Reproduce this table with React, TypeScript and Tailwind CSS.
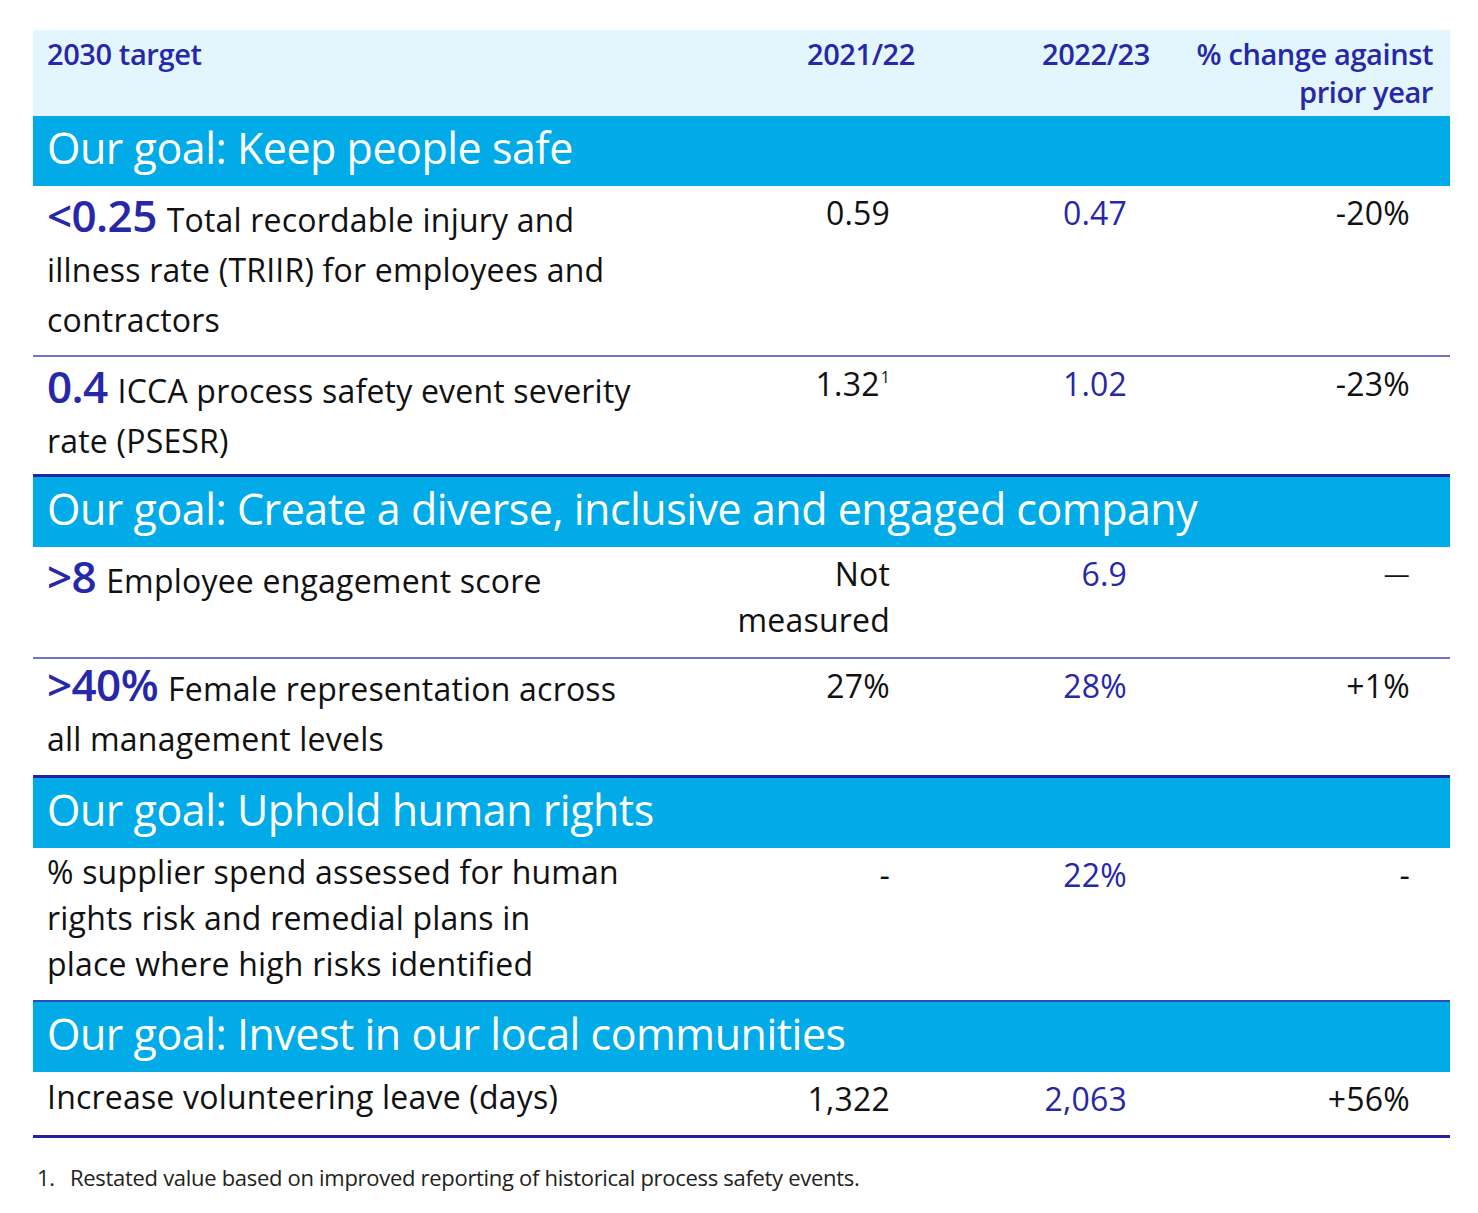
import React from 'react';

type Row = {
  target?: string;
  lines: string[];
  prev: React.ReactNode;
  curr: string;
  change: React.ReactNode;
  h: string;
  lead: string;
  border: 'thin' | 'thick' | 'mid';
};

type Group = { goal: string; rows: Row[] };

const groups: Group[] = [
  {
    goal: 'Our goal: Keep people safe',
    rows: [
      {
        target: '<0.25',
        lines: ['Total recordable injury and', 'illness rate (TRIIR) for employees and', 'contractors'],
        prev: '0.59',
        curr: '0.47',
        change: '-20%',
        h: 'h-[169px]',
        lead: 'leading-[50px] pt-1',
        border: 'thin',
      },
      {
        target: '0.4',
        lines: ['ICCA process safety event severity', 'rate (PSESR)'],
        prev: (
          <>
            1.32<sup className="text-[16px] -top-[13px] ml-[1px]">1</sup>
          </>
        ),
        curr: '1.02',
        change: '-23%',
        h: 'h-[117px]',
        lead: 'leading-[50px] pt-1',
        border: 'thick',
      },
    ],
  },
  {
    goal: 'Our goal: Create a diverse, inclusive and engaged company',
    rows: [
      {
        target: '>8',
        lines: ['Employee engagement score'],
        prev: (
          <>
            Not
            <br />
            measured
          </>
        ),
        curr: '6.9',
        change: <span className="text-[26px] relative -top-[3px]">—</span>,
        h: 'h-[110px]',
        lead: 'leading-[50px] pt-1',
        border: 'thin',
      },
      {
        target: '>40%',
        lines: ['Female representation across', 'all management levels'],
        prev: '27%',
        curr: '28%',
        change: '+1%',
        h: 'h-[116px]',
        lead: 'leading-[50px]',
        border: 'thick',
      },
    ],
  },
  {
    goal: 'Our goal: Uphold human rights',
    rows: [
      {
        lines: ['% supplier spend assessed for human', 'rights risk and remedial plans in', 'place where high risks identified'],
        prev: '-',
        curr: '22%',
        change: '-',
        h: 'h-[152px]',
        lead: 'leading-[46px] pt-[1px]',
        border: 'mid',
      },
    ],
  },
  {
    goal: 'Our goal: Invest in our local communities',
    rows: [
      {
        lines: ['Increase volunteering leave (days)'],
        prev: '1,322',
        curr: '2,063',
        change: '+56%',
        h: 'h-[63px]',
        lead: 'leading-[50px]',
        border: 'thick',
      },
    ],
  },
];

const font = "font-['Open_Sans','Noto_Sans',sans-serif]";

const App: React.FC = () => {
  return (
    <div className={`w-[1478px] h-[1213px] bg-white pt-[30px] pl-[33px] ${font}`}>
      <div className="w-[1417px]">
        {/* Header */}
        <div className="grid grid-cols-[627px_270px_237px_283px] h-[86px] bg-[#e3f6fd] text-[#2727a9] font-semibold text-[29px] leading-[38px] tracking-[-0.4px] pt-[5px]">
          <div className="pl-[14px]">2030 target</div>
          <div className="text-right pr-[15px]">2021/22</div>
          <div className="text-right pr-[17px]">2022/23</div>
          <div className="text-right pr-[17px] whitespace-nowrap">
            % change against
            <br />
            prior year
          </div>
        </div>

        {groups.map((g, gi) => (
          <div key={gi}>
            <div className="h-[70px] bg-[#00abe8] flex items-center pl-[14px] pb-[6px] text-white text-[43px] tracking-[-0.5px] whitespace-nowrap">
              {g.goal}
            </div>
            {g.rows.map((r, ri) => (
              <div key={ri}>
                <div className={`grid grid-cols-[627px_270px_237px_283px] ${r.h}`}>
                  <div className={`pl-[14px] text-[32px] text-[#111] tracking-[0.2px] whitespace-nowrap ${r.lead}`}>
                    {r.lines.map((l, li) => (
                      <React.Fragment key={li}>
                        {li === 0 && r.target && (
                          <span className="text-[#2727a9] font-semibold text-[44px] tracking-[-0.6px] mr-[10px]">{r.target}</span>
                        )}
                        {l}
                        {li < r.lines.length - 1 && <br />}
                      </React.Fragment>
                    ))}
                  </div>
                  <div className="text-right pr-[40px] pt-1 text-[32px] leading-[46px] tracking-[0.2px] text-[#111]">{r.prev}</div>
                  <div className="text-right pr-[40px] pt-1 text-[32px] leading-[46px] tracking-[0.2px] text-[#2727a9]">{r.curr}</div>
                  <div className="text-right pr-[40px] pt-1 text-[32px] leading-[46px] tracking-[0.2px] text-[#111]">{r.change}</div>
                </div>
                {r.border === 'thin' && <div className="h-[2px] bg-[#7373cf]" />}
                {r.border === 'thick' && <div className="h-[3px] bg-[#2222a2]" />}
                {r.border === 'mid' && <div className="h-[2px] bg-[#2a4fb8]" />}
              </div>
            ))}
          </div>
        ))}

        {/* Footnote */}
        <div className="flex mt-[23px] pl-[4px] text-[22px] text-[#222] tracking-[-0.3px]">
          <span className="w-[33px]">1.</span>
          <span>Restated value based on improved reporting of historical process safety events.</span>
        </div>
      </div>
    </div>
  );
};

export default App;
